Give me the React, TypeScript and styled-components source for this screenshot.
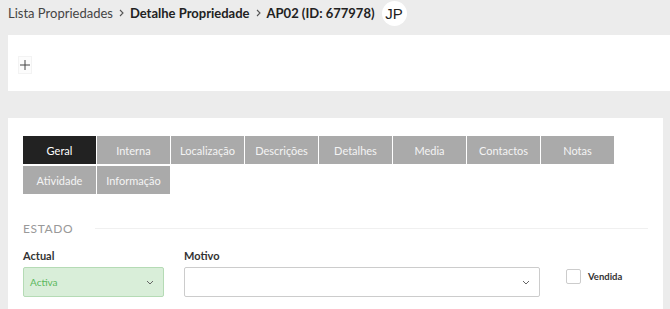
import React, { useState } from 'react'
import styled, { createGlobalStyle } from 'styled-components'

const GlobalStyle = createGlobalStyle`
  html, body {
    margin: 0;
    padding: 0;
    background: #ececec;
    font-family: 'Lato', 'Liberation Sans', sans-serif;
    overflow: hidden;
  }
`

const Page = styled.div`
  width: 670px;
  height: 309px;
  padding-left: 8px;
  box-sizing: border-box;
  overflow: hidden;
`

const Breadcrumb = styled.div`
  display: flex;
  align-items: center;
  height: 27px;
  padding-bottom: 1px;
  box-sizing: border-box;
  font-size: 13px;
  color: #333;
  gap: 5px;
`

const Crumb = styled.span<{ bold?: boolean }>`
  font-weight: ${(props) => (props.bold ? 700 : 400)};
  color: ${(props) => (props.bold ? '#222' : '#444')};
`

const Sep = styled.span`
  display: flex;
  align-items: center;
  margin: 0 1px;
`

const Avatar = styled.div`
  width: 25px;
  height: 25px;
  border-radius: 50%;
  background: #fff;
  display: flex;
  align-items: center;
  justify-content: center;
  font-family: 'Liberation Sans', Arial, sans-serif;
  font-size: 15px;
  color: #222;
  margin-left: 2px;
`

const ActionPanel = styled.div`
  background: #fff;
  margin-top: 8px;
  height: 56px;
  display: flex;
  align-items: center;
  padding: 3px 0 0 10px;
  box-sizing: border-box;
`

const PlusButton = styled.button`
  width: 14px;
  height: 18px;
  border: 1px solid #f3f3f3;
  background: #fcfcfc;
  padding: 0;
  display: flex;
  align-items: center;
  justify-content: center;
  color: #444;
  cursor: pointer;
`

const MainPanel = styled.div`
  background: #fff;
  margin-top: 27px;
  margin-right: 7px;
  padding: 18px 15px 20px;
  height: 200px;
`

const Tabs = styled.div`
  display: flex;
  flex-wrap: wrap;
  gap: 2px 1px;
`

const Tab = styled.div<{ active?: boolean }>`
  width: 73px;
  height: 28px;
  display: flex;
  align-items: center;
  justify-content: center;
  font-size: 11px;
  color: ${(props) => (props.active ? '#fff' : '#f4f4f4')};
  background: ${(props) => (props.active ? '#222' : '#aaa')};
  cursor: pointer;
`

const Legend = styled.div`
  display: flex;
  align-items: center;
  margin-top: 27px;
  font-size: 12px;
  color: #999;
  letter-spacing: 0.6px;
  gap: 22px;
`

const LegendLine = styled.div`
  flex: 1;
  height: 1px;
  background: #f0f0f0;
`

const FieldRow = styled.div`
  display: flex;
  align-items: flex-end;
  margin-top: 13px;
  gap: 20px;
`

const Field = styled.div<{ width: number }>`
  width: ${(props) => props.width}px;
  display: flex;
  flex-direction: column;
  gap: 5px;
`

const Label = styled.div`
  font-size: 11px;
  font-weight: 700;
  color: #333;
`

const SelectBox = styled.div<{ success?: boolean }>`
  height: 30px;
  box-sizing: border-box;
  border: 1px solid ${(props) => (props.success ? '#b5dbb5' : '#ccc')};
  background: ${(props) => (props.success ? '#d9eed9' : '#fff')};
  border-radius: 2px;
  display: flex;
  align-items: center;
  justify-content: space-between;
  padding: 0 9px 0 6px;
  font-size: 10px;
  color: #5cb85c;
`

const CheckWrap = styled.label`
  display: flex;
  align-items: center;
  gap: 7px;
  margin-left: 6px;
  padding-bottom: 13px;
  font-size: 9.5px;
  font-weight: 700;
  color: #333;
  cursor: pointer;
`

const CheckBox = styled.span`
  width: 13px;
  height: 13px;
  border: 1px solid #ccc;
  border-radius: 2px;
  background: #fff;
`

const Chevron = () => (
  <svg width="8" height="5" viewBox="0 0 8 5">
    <path d="M1 1 L4 4 L7 1" fill="none" stroke="#666" strokeWidth="1" />
  </svg>
)

const CrumbArrow = () => (
  <svg width="5" height="8" viewBox="0 0 5 8">
    <path d="M1 1 L4 4 L1 7" fill="none" stroke="#555" strokeWidth="1.1" />
  </svg>
)

const tabs = [
  'Geral',
  'Interna',
  'Localização',
  'Descrições',
  'Detalhes',
  'Media',
  'Contactos',
  'Notas',
  'Atividade',
  'Informação',
]

export default function App() {
  const [active, setActive] = useState('Geral')
  return (
    <Page>
      <GlobalStyle />
      <Breadcrumb>
        <Crumb>Lista Propriedades</Crumb>
        <Sep>
          <CrumbArrow />
        </Sep>
        <Crumb bold>Detalhe Propriedade</Crumb>
        <Sep>
          <CrumbArrow />
        </Sep>
        <Crumb bold>AP02 (ID: 677978)</Crumb>
        <Avatar>JP</Avatar>
      </Breadcrumb>
      <ActionPanel>
        <PlusButton>
          <svg width="10" height="10" viewBox="0 0 10 10">
            <path d="M5 0 V10 M0 5 H10" stroke="#444" strokeWidth="1" />
          </svg>
        </PlusButton>
      </ActionPanel>
      <MainPanel>
        <Tabs>
          {tabs.map((t) => (
            <Tab key={t} active={t === active} onClick={() => setActive(t)}>
              {t}
            </Tab>
          ))}
        </Tabs>
        <Legend>
          ESTADO
          <LegendLine />
        </Legend>
        <FieldRow>
          <Field width={141}>
            <Label>Actual</Label>
            <SelectBox success>
              Activa
              <Chevron />
            </SelectBox>
          </Field>
          <Field width={356}>
            <Label>Motivo</Label>
            <SelectBox>
              <span />
              <Chevron />
            </SelectBox>
          </Field>
          <CheckWrap>
            <CheckBox />
            Vendida
          </CheckWrap>
        </FieldRow>
      </MainPanel>
    </Page>
  )
}
